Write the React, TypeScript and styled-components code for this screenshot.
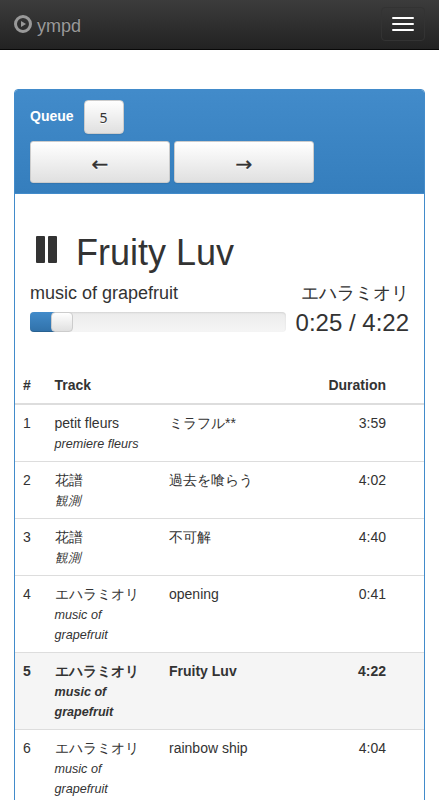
import React from 'react';
import styled, { createGlobalStyle, css } from 'styled-components';

const GlobalStyle = createGlobalStyle`
  *, *::before, *::after { box-sizing: border-box; }
  html, body { margin: 0; height: 800px; overflow: hidden; background: #fff; }
  body {
    font: 14px/20px "Liberation Sans", sans-serif;
    color: #333;
  }
`;

const Page = styled.div`
  display: flex;
  flex-direction: column;
  height: 800px;
  overflow: hidden;
`;

const Navbar = styled.nav`
  display: flex;
  flex: none;
  align-items: flex-start;
  justify-content: space-between;
  height: 50px;
  padding: 7px 14px 0;
  background: linear-gradient(#3c3c3c, #222);
  border-bottom: 1px solid #080808;
`;

const Brand = styled.a`
  display: flex;
  gap: 5px;
  padding-top: 8px;
  font-size: 18px;
  line-height: 22px;
  color: #999;
  text-shadow: 0 -1px 0 rgba(0, 0, 0, 0.25);
`;

const BrandIcon = styled.svg`
  width: 18px;
  height: 18px;
`;

const Toggle = styled.button`
  display: flex;
  flex-direction: column;
  gap: 4px;
  width: 44px;
  height: 34px;
  padding: 9px 10px;
  background: transparent;
  border: 1px solid #333;
  border-radius: 4px;
`;

const Bar = styled.span`
  width: 22px;
  height: 2px;
  border-radius: 1px;
  background: #fff;
`;

const Panel = styled.main`
  flex: none;
  margin: 39px 14px 0;
  border: 1px solid #428bca;
  border-radius: 4px;
`;

const PanelHeading = styled.header`
  height: 104px;
  padding: 10px 15px;
  background: linear-gradient(#428bca, #357ebd);
  border-bottom: 1px solid #428bca;
  border-radius: 3px 3px 0 0;
`;

const HeadingLine = styled.div`
  display: flex;
  gap: 10px;
  color: #fff;
  font-weight: bold;
  line-height: 33px;
`;

const ButtonRow = styled.div`
  display: flex;
  gap: 4px;
  margin-top: 7px;
`;

const Button = styled.button<{ $wide?: boolean }>`
  display: flex;
  align-items: center;
  justify-content: center;
  width: ${p => (p.$wide ? 140 : 40)}px;
  height: ${p => (p.$wide ? 42 : 34)}px;
  padding: ${p => (p.$wide ? '3px 0 0' : '0')};
  border: 1px solid #ccc;
  border-radius: ${p => (p.$wide ? 3 : 4)}px;
  background: linear-gradient(#fff, #e0e0e0);
  box-shadow: inset 0 1px 0 rgba(255, 255, 255, 0.15), 0 1px 1px rgba(0, 0, 0, 0.075);
  color: #333;
  font: ${p => (p.$wide ? '20px "DejaVu Sans"' : '14px "Noto Sans"')}, sans-serif;
  -webkit-text-stroke: ${p => (p.$wide ? '0.4px #333' : '0')};
  text-shadow: 0 1px 0 #fff;
`;

const Player = styled.section`
  padding: 36px 15px 0;
  height: 173px;
`;

const Title = styled.h1`
  display: flex;
  gap: 18px;
  margin: 0;
  padding-left: 6px;
  font-size: 36px;
  font-weight: 400;
  line-height: 46px;
`;

const PauseIcon = styled.svg`
  width: 22px;
  height: 28px;
  margin-top: 6px;
`;

const Split = styled.div`
  display: flex;
  justify-content: space-between;
`;

const Meta = styled.h4`
  margin: 6px 0 0;
  height: 22px;
  font-size: 18px;
  font-weight: 400;
  line-height: 22px;
`;

const Track = styled.div`
  display: flex;
  width: 256px;
  height: 20px;
  margin-top: 8px;
  border-radius: 4px;
  background: linear-gradient(#ebebeb, #f5f5f5);
  box-shadow: inset 0 1px 2px rgba(0, 0, 0, 0.1);
`;

const Fill = styled.div`
  height: 20px;
  margin-right: -4px;
  border-radius: 4px 0 0 4px;
  background: linear-gradient(#428bca, #3071a9);
  box-shadow: inset 0 -1px 0 rgba(0, 0, 0, 0.15);
`;

const Handle = styled.div`
  width: 22px;
  height: 20px;
  border: 1px solid #ccc;
  border-radius: 4px;
  background: linear-gradient(#fff, #e0e0e0);
`;

const Time = styled.div`
  margin-top: 6px;
  font-size: 24px;
  line-height: 26px;
`;

const Table = styled.table`
  width: 409px;
  table-layout: fixed;
  border-collapse: separate;
  border-spacing: 0;
`;

const cell = css<{ $right?: boolean }>`
  padding: 8px;
  text-align: ${p => (p.$right ? 'right' : 'left')};
  vertical-align: top;
`;

const Th = styled.th<{ $right?: boolean }>`
  ${cell}
  height: 38px;
  border-bottom: 2px solid #ddd;
`;

const Td = styled.td<{ $right?: boolean }>`
  ${cell}
`;

const Row = styled.tr<{ $active: boolean }>`
  font-weight: ${p => (p.$active ? 'bold' : 'normal')};
  background: ${p => (p.$active ? '#f5f5f5' : 'transparent')};

  &:not(:first-child) > td { border-top: 1px solid #ddd; }
`;

const Artist = styled.div`
  height: 21px;
  white-space: nowrap;
`;

const Album = styled.div`
  max-width: 85px;
  margin-bottom: -1px;
  font-size: 12.6px;
  font-style: italic;
`;

const Col = styled.col<{ $w: number }>`
  width: ${p => p.$w}px;
`;

const songs = [
  { artist: 'petit fleurs', album: 'premiere fleurs', title: 'ミラフル**', time: '3:59' },
  { artist: '花譜', album: '観測', title: '過去を喰らう', time: '4:02' },
  { artist: '花譜', album: '観測', title: '不可解', time: '4:40' },
  { artist: 'エハラミオリ', album: 'music of grapefruit', title: 'opening', time: '0:41' },
  { artist: 'エハラミオリ', album: 'music of grapefruit', title: 'Fruity Luv', time: '4:22' },
  { artist: 'エハラミオリ', album: 'music of grapefruit', title: 'rainbow ship', time: '4:04' },
];
const current = 4;
const progress = 25 / 262;

export default function App() {
  return (
    <Page>
      <GlobalStyle />
      <Navbar>
        <Brand>
          <BrandIcon viewBox="0 0 18 18">
            <circle cx="9" cy="9" r="7.5" fill="none" stroke="#999" strokeWidth="3" />
            <path d="M7 6l5 3-5 3z" fill="#999" />
          </BrandIcon>
          <span>ympd</span>
        </Brand>
        <Toggle aria-label="Toggle navigation">
          <Bar /><Bar /><Bar />
        </Toggle>
      </Navbar>
      <Panel>
        <PanelHeading>
          <HeadingLine>
            <span>Queue</span>
            <Button>5</Button>
          </HeadingLine>
          <ButtonRow>
            <Button $wide>←</Button>
            <Button $wide>→</Button>
          </ButtonRow>
        </PanelHeading>
        <Player>
          <Title>
            <PauseIcon viewBox="0 0 22 28">
              <rect x="0" y="0" width="9" height="27" rx="1" fill="#333" />
              <rect x="12" y="0" width="9" height="27" rx="1" fill="#333" />
            </PauseIcon>
            <span>Fruity Luv</span>
          </Title>
          <Split>
            <Meta>music of grapefruit</Meta>
            <Meta>エハラミオリ</Meta>
          </Split>
          <Split>
            <Track>
              <Fill style={{ width: `${progress * 256 + 1}px` }} />
              <Handle />
            </Track>
            <Time>0:25 / 4:22</Time>
          </Split>
        </Player>
        <Table>
          <colgroup>
            <Col $w={31.5} /><Col $w={114.5} /><Col $w={138} /><Col $w={95} /><Col $w={30} />
          </colgroup>
          <thead>
            <tr>
              <Th>#</Th><Th>Track</Th><Th /><Th $right>Duration</Th><Th />
            </tr>
          </thead>
          <tbody>
            {songs.map((s, i) => (
              <Row key={i} $active={i === current}>
                <Td>{i + 1}</Td>
                <Td>
                  <Artist>{s.artist}</Artist>
                  <Album>{s.album}</Album>
                </Td>
                <Td>{s.title}</Td>
                <Td $right>{s.time}</Td>
                <Td />
              </Row>
            ))}
          </tbody>
        </Table>
      </Panel>
    </Page>
  );
}
